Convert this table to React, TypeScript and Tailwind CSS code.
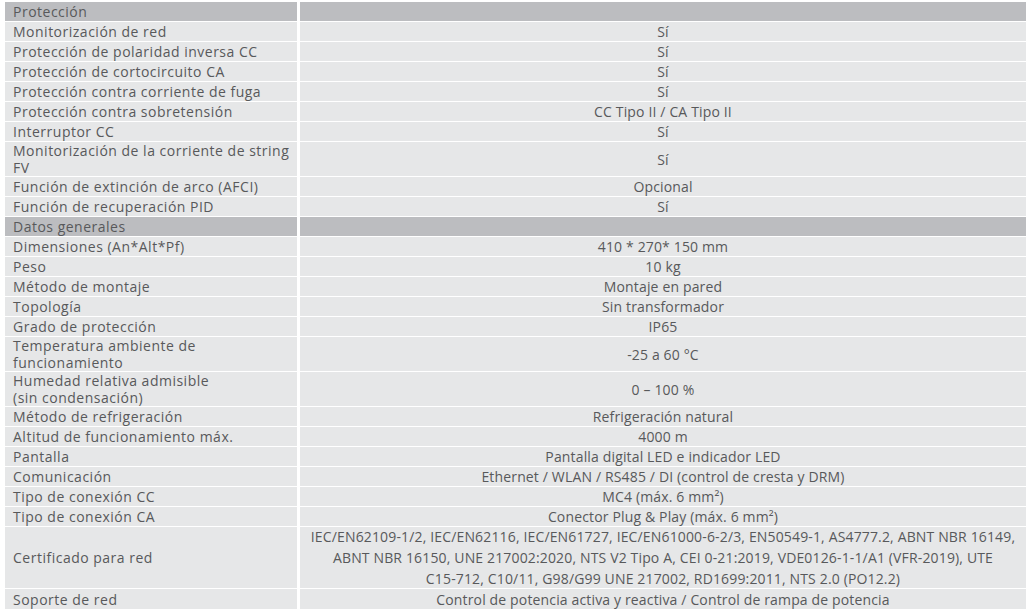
import React from 'react';

type Row = { label: string; value?: string; header?: boolean; h?: string };

const rows: Row[] = [
  { label: 'Protección', header: true },
  { label: 'Monitorización de red', value: 'Sí' },
  { label: 'Protección de polaridad inversa CC', value: 'Sí' },
  { label: 'Protección de cortocircuito CA', value: 'Sí' },
  { label: 'Protección contra corriente de fuga', value: 'Sí' },
  { label: 'Protección contra sobretensión', value: 'CC Tipo II / CA Tipo II' },
  { label: 'Interruptor CC', value: 'Sí' },
  { label: 'Monitorización de la corriente de string\nFV', value: 'Sí', h: 'h-[34px]' },
  { label: 'Función de extinción de arco (AFCI)', value: 'Opcional' },
  { label: 'Función de recuperación PID', value: 'Sí' },
  { label: 'Datos generales', header: true },
  { label: 'Dimensiones (An*Alt*Pf)', value: '410 * 270* 150 mm' },
  { label: 'Peso', value: '10 kg' },
  { label: 'Método de montaje', value: 'Montaje en pared' },
  { label: 'Topología', value: 'Sin transformador' },
  { label: 'Grado de protección', value: 'IP65' },
  { label: 'Temperatura ambiente de\nfuncionamiento', value: '-25 a 60 °C', h: 'h-[34px]' },
  { label: 'Humedad relativa admisible\n(sin condensación)', value: '0 – 100 %', h: 'h-[34px]' },
  { label: 'Método de refrigeración', value: 'Refrigeración natural' },
  { label: 'Altitud de funcionamiento máx.', value: '4000 m' },
  { label: 'Pantalla', value: 'Pantalla digital LED e indicador LED' },
  { label: 'Comunicación', value: 'Ethernet / WLAN / RS485 / DI (control de cresta y DRM)' },
  { label: 'Tipo de conexión CC', value: 'MC4 (máx. 6 mm²)' },
  { label: 'Tipo de conexión CA', value: 'Conector Plug & Play (máx. 6 mm²)' },
];

const certLines = [
  'IEC/EN62109-1/2, IEC/EN62116, IEC/EN61727, IEC/EN61000-6-2/3, EN50549-1, AS4777.2, ABNT NBR 16149,',
  'ABNT NBR 16150, UNE 217002:2020, NTS V2 Tipo A, CEI 0-21:2019, VDE0126-1-1/A1 (VFR-2019), UTE',
  'C15-712, C10/11, G98/G99 UNE 217002, RD1699:2011, NTS 2.0 (PO12.2)',
];

// label cells get wider tracking than value cells (reference font is wider in lowercase)
const labelCls = 'pl-2 flex items-center leading-[17px] whitespace-pre-line tracking-[0.5px]';
const valueCls = 'flex items-center justify-center tracking-[0.15px]';

export default function App() {
  return (
    <div className="w-[1031px] h-[615px] bg-white pt-[2px] px-[5px] text-[#58595b] text-[14px] font-['Open_Sans',sans-serif]">
      <div className="grid grid-cols-[292px_1fr] gap-x-[3px] gap-y-px">
        {rows.map((r, i) => (
          <React.Fragment key={i}>
            <div className={`${r.h ?? 'h-[19px]'} ${r.header ? 'bg-[#bcbdc0]' : 'bg-[#e6e7e8]'} ${labelCls}`}>
              {r.label}
            </div>
            <div className={`${r.h ?? 'h-[19px]'} ${r.header ? 'bg-[#bcbdc0]' : 'bg-[#e6e7e8]'} ${valueCls}`}>
              {r.value}
            </div>
          </React.Fragment>
        ))}
        <div className={`h-[61px] bg-[#e6e7e8] ${labelCls}`}>Certificado para red</div>
        <div className="h-[61px] bg-[#e6e7e8] flex flex-col items-center justify-center leading-[21px] whitespace-nowrap tracking-[0.15px]">
          {certLines.map((l) => (
            <span key={l}>{l}</span>
          ))}
        </div>
        <div className={`h-[20px] bg-[#e6e7e8] ${labelCls}`}>Soporte de red</div>
        <div className={`h-[20px] bg-[#e6e7e8] ${valueCls}`}>
          Control de potencia activa y reactiva / Control de rampa de potencia
        </div>
      </div>
    </div>
  );
}
